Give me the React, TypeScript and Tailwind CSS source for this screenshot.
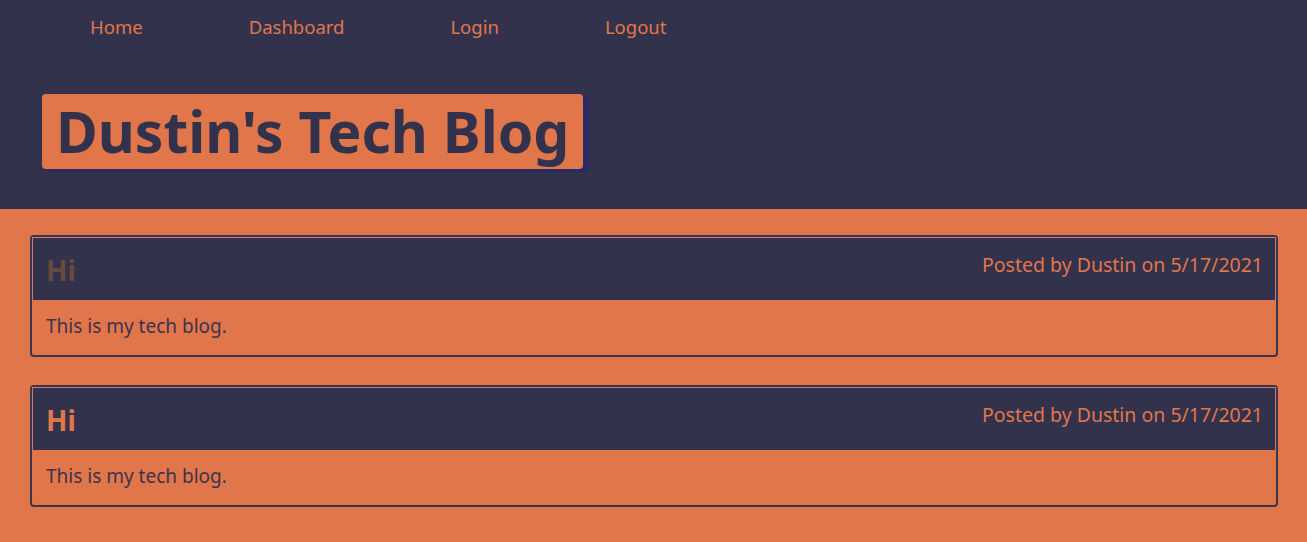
export default function App() {
  const posts = [
    { title: "Hi", author: "Dustin", date: "5/17/2021", body: "This is my tech blog.", dim: true },
    { title: "Hi", author: "Dustin", date: "5/17/2021", body: "This is my tech blog.", dim: false },
  ];

  return (
    <div className="min-h-[542px] bg-[#e0764a] font-['Noto_Sans',sans-serif]">
      <header className="h-[209px] bg-[#32324c]">
        <nav className="flex gap-[106px] pl-[90px] pt-[13px] text-[18.5px] leading-[28px] text-[#e0764a]">
          <a href="#">Home</a>
          <a href="#">Dashboard</a>
          <a href="#">Login</a>
          <a href="#">Logout</a>
        </nav>
        <div className="pl-[42px] pt-[53px]">
          <h1 className="inline-block rounded-[4px] bg-[#e0764a] px-[14px] text-[57px] font-bold leading-[75px] text-[#32324c] shadow-[6px_3px_0_#2c2a64]">
            Dustin's Tech Blog
          </h1>
        </div>
      </header>

      <main className="flex flex-col gap-[28px] pl-[30px] pr-[29px] pt-[26px] pb-[34px]">
        {posts.map((p, i) => (
          <article key={i} className="rounded-[4px] border-2 border-[#3b3450]">
            <div className="flex items-start justify-between border border-[#c97a6a] border-b-0 bg-[#32324c] pl-[13px] pr-[12px] pt-[12px] pb-[10px] h-[63px]">
              <h2 className={`text-[28px] font-bold leading-[40px] ${p.dim ? "text-[#6b4a3e]" : "text-[#e0764a]"}`}>
                {p.title}
              </h2>
              <span className="pt-[1px] text-[19.5px] leading-[28px] text-[#e0764a]">
                Posted by {p.author} on {p.date}
              </span>
            </div>
            <p className="px-[14px] pt-[12px] pb-[15px] text-[19px] leading-[28px] text-[#3b3450]">{p.body}</p>
          </article>
        ))}
      </main>
    </div>
  );
}
